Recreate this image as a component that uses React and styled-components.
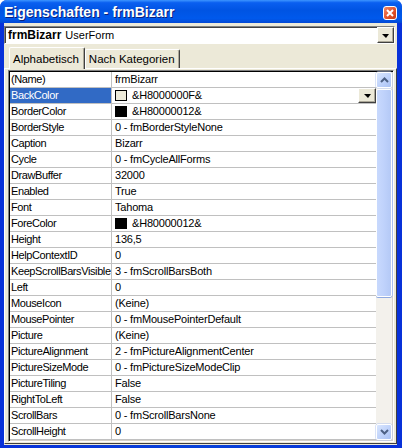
import styled, { createGlobalStyle } from "styled-components";

const GlobalStyle = createGlobalStyle`
  html, body {
    margin: 0;
    padding: 0;
    background: #ffffff;
  }
  * {
    box-sizing: border-box;
  }
`;

const UI_FONT = `"Liberation Sans", Arial, sans-serif`;

const Window = styled.div`
  width: 402px;
  height: 448px;
  display: flex;
  flex-direction: column;
  background: linear-gradient(to right, #0831d9 0%, #0842d8 50%, #0831d9 100%);
  border-radius: 7px 7px 0 0;
  overflow: hidden;
  font-family: ${UI_FONT};
`;

const TitleBar = styled.div`
  height: 23px;
  flex: none;
  display: flex;
  align-items: center;
  justify-content: space-between;
  padding: 0 5px 0 4px;
  background: linear-gradient(
    to bottom,
    #3d95ff 0%,
    #0a5ff0 12%,
    #0054e3 45%,
    #0059ec 80%,
    #0348d4 100%
  );
`;

const Title = styled.span`
  color: #ffffff;
  font-weight: bold;
  font-size: 14px;
  margin-top: 1px;
  text-shadow: 1px 1px 0 #0a1f7a;
`;

const CloseButton = styled.div`
  width: 14px;
  height: 14px;
  margin-top: 2px;
  border: 1px solid #ffffff;
  border-radius: 3px;
  background: linear-gradient(135deg, #f08a6a 0%, #e2522a 55%, #c43d17 100%);
  display: flex;
  align-items: center;
  justify-content: center;
`;

const Frame = styled.div`
  flex: 1;
  display: flex;
  flex-direction: column;
  margin: 0 5px 5px 4px;
  background: #ece9d8;
  padding: 3px 0 1px 0;
`;

const Combo = styled.div`
  height: 18px;
  flex: none;
  display: flex;
  align-items: stretch;
  margin-right: 2px;
  background: #ffffff;
  border-top: 1px solid #808080;
  border-left: 1px solid #808080;
  border-right: 1px solid #ffffff;
  border-bottom: 1px solid #ffffff;
  box-shadow: inset 1px 1px 0 #404040;
`;

const ComboText = styled.div`
  flex: 1;
  display: flex;
  align-items: center;
  padding-left: 3px;
  font-size: 11px;
  color: #000000;
`;

const Bold = styled.b`
  font-weight: bold;
  font-size: 12px;
  margin-right: 4px;
`;

const DropButton = styled.div`
  width: ${(p) => p.$w || 17}px;
  flex: none;
  align-self: stretch;
  display: flex;
  align-items: center;
  justify-content: center;
  background: #ece9d8;
  border-top: 1px solid #ffffff;
  border-left: 1px solid #ffffff;
  border-right: 1px solid #404040;
  border-bottom: 1px solid #404040;
  box-shadow: inset -1px -1px 0 #aca899;
`;

const Triangle = styled.div`
  width: 0;
  height: 0;
  margin-top: 1px;
  border-left: 4px solid transparent;
  border-right: 3px solid transparent;
  border-top: 4px solid #000000;
`;

const TabRow = styled.div`
  height: 22px;
  flex: none;
  display: flex;
  align-items: flex-end;
  padding: 0 0 0 5px;
  margin-top: 2px;
`;

const Tab = styled.div`
  height: ${(p) => (p.$active ? 22 : 19)}px;
  padding: 0 ${(p) => (p.$active ? 5 : 4)}px 0 3px;
  display: flex;
  align-items: center;
  font-size: 11.5px;
  color: #000000;
  background: #ece9d8;
  border-top: 1px solid #ffffff;
  border-left: 1px solid #ffffff;
  border-right: 1px solid #404040;
  box-shadow: inset -1px 0 0 #aca899;
  border-radius: 2px 2px 0 0;
  margin-bottom: ${(p) => (p.$active ? -1 : 0)}px;
  position: relative;
  z-index: ${(p) => (p.$active ? 1 : 0)};
`;

const Panel = styled.div`
  flex: 1;
  display: flex;
  padding: 1px 2px 1px 3px;
  border-top: 1px solid #ffffff;
  border-left: 1px solid #ffffff;
  border-right: 1px solid #404040;
  border-bottom: 1px solid #404040;
`;

const ListBox = styled.div`
  flex: 1;
  display: flex;
  border-top: 1px solid #808080;
  border-left: 1px solid #808080;
  border-right: 1px solid #ffffff;
  border-bottom: 1px solid #ffffff;
  box-shadow: inset 1px 1px 0 #000000, inset -1px -1px 0 #d4d0c8;
  padding: 1px;
  background: #ffffff;
`;

const Grid = styled.div`
  flex: 1;
  display: flex;
  flex-direction: column;
  overflow: hidden;
`;

const Row = styled.div`
  height: 16px;
  flex: none;
  display: grid;
  grid-template-columns: 103px 1fr;
  border-bottom: 1px solid #c0c0c0;
  font-size: 11px;
  line-height: 15px;
  letter-spacing: -0.2px;
  color: #000000;
`;

const NameCell = styled.div`
  padding-left: 1px;
  margin-right: 1px;
  border-right: 1px solid #c0c0c0;
  white-space: nowrap;
  overflow: hidden;
  letter-spacing: -0.4px;
  background: ${(p) => (p.$selected ? "#316ac5" : "transparent")};
  color: ${(p) => (p.$selected ? "#ffffff" : "#000000")};
`;

const ValueCell = styled.div`
  display: flex;
  align-items: center;
  padding-left: 2px;
  white-space: nowrap;
  overflow: hidden;
`;

const ValueText = styled.span`
  flex: 1;
`;

const Swatch = styled.span`
  width: 12px;
  height: 11px;
  flex: none;
  margin-right: 5px;
  border: 1px solid #000000;
  background: ${(p) => p.$color};
`;

const ScrollBar = styled.div`
  width: 16px;
  flex: none;
  display: flex;
  flex-direction: column;
  background: #f3f1ec;
  gap: 1px;
`;

const ScrollArrow = styled.div`
  height: 16px;
  flex: none;
  display: flex;
  align-items: center;
  justify-content: center;
  border: 1px solid #ffffff;
  border-radius: 2px;
  background: linear-gradient(135deg, #d9e6fe 0%, #bcd0fa 60%, #a9c1f3 100%);
  box-shadow: 0 0 0 0.5px #b6c8ef;
`;

const Thumb = styled.div`
  height: 208px;
  flex: none;
  border: 1px solid #ffffff;
  border-radius: 2px;
  background: linear-gradient(to right, #c8d9fd 0%, #bfd2fb 50%, #b4c9f6 100%);
  box-shadow: 0 1px 0 #8fa9e0, 1px 0 0 #a9bfee;
`;

const Track = styled.div`
  flex: 1;
`;

const rows = [
  { name: "(Name)", value: "frmBizarr" },
  { name: "BackColor", value: "&H8000000F&", swatch: "#ece9d8", selected: true },
  { name: "BorderColor", value: "&H80000012&", swatch: "#000000" },
  { name: "BorderStyle", value: "0 - fmBorderStyleNone" },
  { name: "Caption", value: "Bizarr" },
  { name: "Cycle", value: "0 - fmCycleAllForms" },
  { name: "DrawBuffer", value: "32000" },
  { name: "Enabled", value: "True" },
  { name: "Font", value: "Tahoma" },
  { name: "ForeColor", value: "&H80000012&", swatch: "#000000" },
  { name: "Height", value: "136,5" },
  { name: "HelpContextID", value: "0" },
  { name: "KeepScrollBarsVisible", value: "3 - fmScrollBarsBoth" },
  { name: "Left", value: "0" },
  { name: "MouseIcon", value: "(Keine)" },
  { name: "MousePointer", value: "0 - fmMousePointerDefault" },
  { name: "Picture", value: "(Keine)" },
  { name: "PictureAlignment", value: "2 - fmPictureAlignmentCenter" },
  { name: "PictureSizeMode", value: "0 - fmPictureSizeModeClip" },
  { name: "PictureTiling", value: "False" },
  { name: "RightToLeft", value: "False" },
  { name: "ScrollBars", value: "0 - fmScrollBarsNone" },
  { name: "ScrollHeight", value: "0" },
];

function Chevron({ up }) {
  return (
    <svg width="9" height="6" viewBox="0 0 9 6">
      <path
        d={up ? "M1 5 L4.5 1.5 L8 5" : "M1 1 L4.5 4.5 L8 1"}
        fill="none"
        stroke="#4d6185"
        strokeWidth="2"
      />
    </svg>
  );
}

function App() {
  return (
    <>
      <GlobalStyle />
      <Window>
        <TitleBar>
          <Title>Eigenschaften - frmBizarr</Title>
          <CloseButton>
            <svg width="8" height="8" viewBox="0 0 8 8">
              <path d="M1 1 L7 7 M7 1 L1 7" stroke="#ffffff" strokeWidth="2" />
            </svg>
          </CloseButton>
        </TitleBar>
        <Frame>
          <Combo>
            <ComboText>
              <Bold>frmBizarr</Bold>UserForm
            </ComboText>
            <DropButton>
              <Triangle />
            </DropButton>
          </Combo>
          <TabRow>
            <Tab $active>Alphabetisch</Tab>
            <Tab>Nach Kategorien</Tab>
          </TabRow>
          <Panel>
            <ListBox>
              <Grid>
                {rows.map((r) => (
                  <Row key={r.name}>
                    <NameCell $selected={r.selected}>{r.name}</NameCell>
                    <ValueCell>
                      {r.swatch && <Swatch $color={r.swatch} />}
                      <ValueText>{r.value}</ValueText>
                      {r.selected && (
                        <DropButton $w={18}>
                          <Triangle />
                        </DropButton>
                      )}
                    </ValueCell>
                  </Row>
                ))}
              </Grid>
              <ScrollBar>
                <ScrollArrow>
                  <Chevron up />
                </ScrollArrow>
                <Thumb />
                <Track />
                <ScrollArrow>
                  <Chevron />
                </ScrollArrow>
              </ScrollBar>
            </ListBox>
          </Panel>
        </Frame>
      </Window>
    </>
  );
}

export default App;
